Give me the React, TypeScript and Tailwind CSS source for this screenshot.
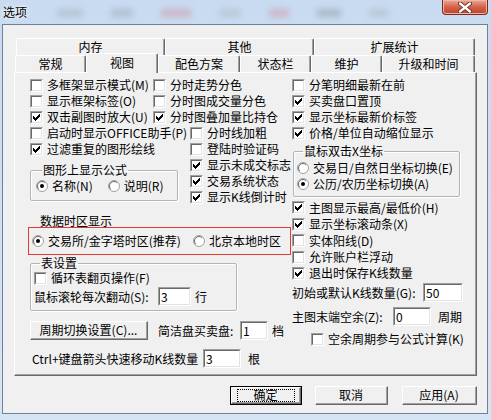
import React from 'react';

// classic win32 3D edges
const sunkenOuter = 'border border-t-[#a0a0a0] border-l-[#a0a0a0] border-b-white border-r-white';
const sunkenInner = 'border border-t-[#696969] border-l-[#696969] border-b-[#e3e3e3] border-r-[#e3e3e3]';

function Box({ checked }: { checked?: boolean }) {
  return (
    <span className={`flex h-[13px] w-[13px] shrink-0 ${sunkenOuter}`}>
      <span className={`flex flex-1 items-center justify-center bg-white ${sunkenInner}`}>
        {checked && (
          <svg width="7" height="7" viewBox="0 0 7 7" shapeRendering="crispEdges">
            <path d="M6 0h1v3h-1v1h-1v1h-1v1h-1v1h-1v-1h-1v-1h-1v-3h1v1h1v1h1v-1h1v-1h1z" fill="#000" />
          </svg>
        )}
      </span>
    </span>
  );
}

function Chk({ label, checked, className = '' }: { label: string; checked?: boolean; className?: string }) {
  return (
    <div className={`flex h-[16px] items-center gap-[4px] whitespace-nowrap ${className}`}>
      <Box checked={checked} />
      <span>{label}</span>
    </div>
  );
}

function Radio({ label, checked, className = '' }: { label: string; checked?: boolean; className?: string }) {
  return (
    <div className={`flex h-[16px] items-center gap-[4px] whitespace-nowrap ${className}`}>
      <svg width="12" height="12" viewBox="0 0 12 12" className="shrink-0">
        <circle cx="6" cy="6" r="5.5" fill="#fff" stroke="#a0a0a0" />
        <path d="M2.8 9.2 A4.5 4.5 0 0 1 9.2 2.8" fill="none" stroke="#696969" />
        {checked && <circle cx="6" cy="6" r="2" fill="#000" />}
      </svg>
      <span>{label}</span>
    </div>
  );
}

function Edit({ value, w }: { value: string; w: string }) {
  return (
    <span className={`flex h-[19px] shrink-0 ${w} ${sunkenOuter}`}>
      <span className={`flex flex-1 items-center bg-white pl-[1px] text-[12px] leading-none ${sunkenInner}`}>
        {value}
      </span>
    </span>
  );
}

function Btn({ label, w, def }: { label: string; w: string; def?: boolean }) {
  return (
    <div className={`flex h-[19px] shrink-0 ${w} ${def ? 'border border-black' : ''}`}>
      <div className="flex flex-1 border border-t-white border-l-white border-b-[#696969] border-r-[#696969]">
        <div className="flex flex-1 items-center justify-center border-b border-r border-b-[#a0a0a0] border-r-[#a0a0a0]">
          {def ? (
            <span className="flex h-[13px] w-[58px] items-center justify-center border border-dotted border-black">{label}</span>
          ) : (
            label
          )}
        </div>
      </div>
    </div>
  );
}

function Group({ title, className = '', children }: { title: string; className?: string; children: React.ReactNode }) {
  return (
    <fieldset className={`rounded-[2px] border border-[#b4b4b4] shadow-[inset_1px_1px_0_#fff,1px_1px_0_#fff] ${className}`}>
      <legend className="ml-[6px] px-[1px] leading-[14px]">{title}</legend>
      {children}
    </fieldset>
  );
}

function Tab({ label, w, selected }: { label: string; w: string; selected?: boolean }) {
  return (
    <div
      className={`flex ${w} shrink-0 items-center justify-center rounded-t-[2px] border-l border-r border-t border-l-white border-t-white border-r-[#696969] bg-[#f0f0f0] shadow-[inset_-1px_0_0_#a0a0a0] ${
        selected ? 'relative z-10 -mb-[1px] h-[20px] pb-[2px]' : 'h-[17px]'
      }`}
    >
      {label}
    </div>
  );
}

const blobs = [
  { w: 'w-[26px]', c: 'bg-[#9aa5b4]' },
  { w: 'w-[22px]', c: 'bg-[#8d98a6]' },
  { w: 'w-[30px]', c: 'bg-[#d17d8c]' },
  { w: 'w-[22px]', c: 'bg-[#a3aebb]' },
  { w: 'w-[20px]', c: 'bg-[#d47f8f]' },
  { w: 'w-[24px]', c: 'bg-[#7c8694]' },
  { w: 'w-[20px]', c: 'bg-[#a2acb9]' },
];

export default function App() {
  return (
    <div className="flex h-[420px] w-[491px] flex-col overflow-hidden bg-gradient-to-b from-[#c8dbf0] to-[#d6e5f6] font-['Noto_Sans_CJK_SC','Liberation_Sans',sans-serif] text-[12px] leading-[16px] text-black">
      {/* title bar */}
      <div className="flex h-[24px] shrink-0 items-start">
        <span className="shrink-0 pl-[3px] pt-[4px] text-[12px] leading-[16px] [text-shadow:0_0_6px_#fff,0_0_3px_#fff]">选项</span>
        <div className="flex flex-1 items-center gap-[28px] overflow-hidden pl-[30px] pt-[9px] opacity-40 blur-[3px]">
          {blobs.map((b, i) => (
            <span key={i} className={`h-[8px] shrink-0 ${b.w} ${b.c}`} />
          ))}
        </div>
        <div className="mr-[3px] flex h-[15px] w-[46px] shrink-0 items-center justify-center rounded-b-[4px] border border-t-0 border-[#7a2a1c] bg-gradient-to-b from-[#e9a996] via-[#d3614a] to-[#c2412a] shadow-[inset_0_0_0_1px_#f0b7a8]">
          <svg width="14" height="11" viewBox="0 0 14 11">
            <path d="M2 1.5 L12 9.5 M12 1.5 L2 9.5" stroke="#5a2018" strokeWidth="4" strokeLinecap="round" />
            <path d="M2 1.5 L12 9.5 M12 1.5 L2 9.5" stroke="#fff" strokeWidth="2.4" strokeLinecap="round" />
          </svg>
        </div>
      </div>

      {/* client area */}
      <div className="ml-[2px] mr-[3px] flex h-[390px] flex-col border border-[#6f8196] bg-[#f0f0f0] pl-[11px] pt-[13px]">
        {/* tabs */}
        <div className="flex h-[17px] pl-[2px]">
          <Tab label="内存" w="w-[149px]" />
          <Tab label="其他" w="w-[149px]" />
          <Tab label="扩展统计" w="w-[161px]" />
        </div>
        <div className="-mt-[2px] flex h-[19px] items-end pl-[1px]">
          <Tab label="常规" w="w-[71px]" />
          <Tab label="视图" w="w-[72px]" selected />
          <Tab label="配色方案" w="w-[82px]" />
          <Tab label="状态栏" w="w-[71px]" />
          <Tab label="维护" w="w-[71px]" />
          <Tab label="升级和时间" w="w-[93px]" />
        </div>

        {/* page */}
        <div className="flex h-[304px] w-[463px] border border-l-white border-t-white border-b-[#696969] border-r-[#696969] pl-[15px] pt-[4px] shadow-[inset_-1px_-1px_0_#a0a0a0]">
          {/* left area */}
          <div className="flex w-[262px] shrink-0 flex-col">
            <div className="grid grid-cols-[123px_auto]">
              <Chk label="多框架显示模式(M)" />
              <Chk label="分时走势分色" />
              <Chk label="显示框架标签(O)" />
              <Chk label="分时图成交量分色" />
              <Chk label="双击副图时放大(U)" checked />
              <Chk label="分时图叠加量比持仓" checked />
            </div>
            <div className="flex">
              <div className="flex w-[160px] shrink-0 flex-col">
                <Chk label="启动时显示OFFICE助手(P)" />
                <Chk label="过滤重复的图形绘线" checked className="h-[15px]" />
                <Group title="图形上显示公式" className="mt-[6px] w-[148px] pb-[6px] pl-[5px] pt-[1px]">
                  <div className="flex gap-[15px]">
                    <Radio label="名称(N)" checked />
                    <Radio label="说明(R)" />
                  </div>
                </Group>
              </div>
              <div className="flex flex-col">
                <Chk label="分时线加粗" />
                <Chk label="登陆时验证码" className="h-[15px]" />
                <Chk label="显示未成交标志" checked className="h-[15px]" />
                <Chk label="交易系统状态" checked className="h-[15px]" />
                <Chk label="显示K线倒计时" checked className="h-[15px]" />
              </div>
            </div>

            <span className="ml-[10px] mt-[10px] leading-[12px]">数据时区显示</span>
            <div className="-ml-[2px] flex h-[28px] w-[263px] items-center border border-[#e53935] pl-[3px]">
              <Radio label="交易所/金字塔时区(推荐)" checked className="w-[161px]" />
              <Radio label="北京本地时区" />
            </div>

            <Group title="表设置" className="mt-[1px] w-[207px] pb-[4px] pl-[3px]">
              <Chk label="循环表翻页操作(F)" />
              <div className="mt-[1px] flex h-[19px] items-center">
                <span className="w-[124px]">鼠标滚轮每次翻动(S):</span>
                <Edit value="3" w="w-[33px]" />
                <span className="ml-[4px]">行</span>
              </div>
            </Group>

            <div className="mt-[10px] flex h-[19px] items-center">
              <Btn label="周期切换设置(C)..." w="w-[118px]" />
              <span className="ml-[10px] w-[82px]">简洁盘买卖盘:</span>
              <Edit value="1" w="w-[28px]" />
              <span className="ml-[4px]">档</span>
            </div>

            <div className="mt-[9px] flex h-[19px] items-center pl-[2px]">
              <span className="w-[171px]">Ctrl+键盘箭头快速移动K线数量</span>
              <Edit value="3" w="w-[38px]" />
              <span className="ml-[7px]">根</span>
            </div>
          </div>

          {/* right column */}
          <div className="flex flex-col">
            <Chk label="分笔明细最新在前" />
            <Chk label="买卖盘口置顶" checked />
            <Chk label="显示坐标最新价标签" checked />
            <Chk label="价格/单位自动缩位显示" checked />
            <Group title="鼠标双击X坐标" className="ml-[1px] mt-[3px] w-[167px] pb-[4px] pl-[3px] pt-[2px]">
              <Radio label="交易日/自然日坐标切换(E)" />
              <Radio label="公历/农历坐标切换(A)" checked />
            </Group>
            <Chk label="主图显示最高/最低价(H)" checked className="mt-[2px] h-[17px]" />
            <Chk label="显示坐标滚动条(X)" checked />
            <Chk label="实体阳线(D)" className="h-[17px]" />
            <Chk label="允许账户栏浮动" />
            <Chk label="退出时保存K线数量" checked />
            <div className="mt-[2px] flex h-[19px] items-center">
              <span className="w-[131px]">初始或默认K线数量(G):</span>
              <Edit value="50" w="w-[40px]" />
            </div>
            <div className="mt-[5px] flex h-[19px] items-center">
              <span className="w-[101px]">主图末端空余(Z):</span>
              <Edit value="0" w="w-[38px]" />
              <span className="ml-[7px]">周期</span>
            </div>
            <Chk label="空余周期参与公式计算(K)" className="ml-[19px] mt-[5px]" />
          </div>
        </div>

        {/* buttons */}
        <div className="mt-[10px] flex w-[463px] justify-end">
          <Btn label="确定" w="w-[72px]" def />
          <div className="ml-[13px]"><Btn label="取消" w="w-[73px]" /></div>
          <div className="ml-[14px]"><Btn label="应用(A)" w="w-[75px]" /></div>
        </div>
      </div>
    </div>
  );
}
